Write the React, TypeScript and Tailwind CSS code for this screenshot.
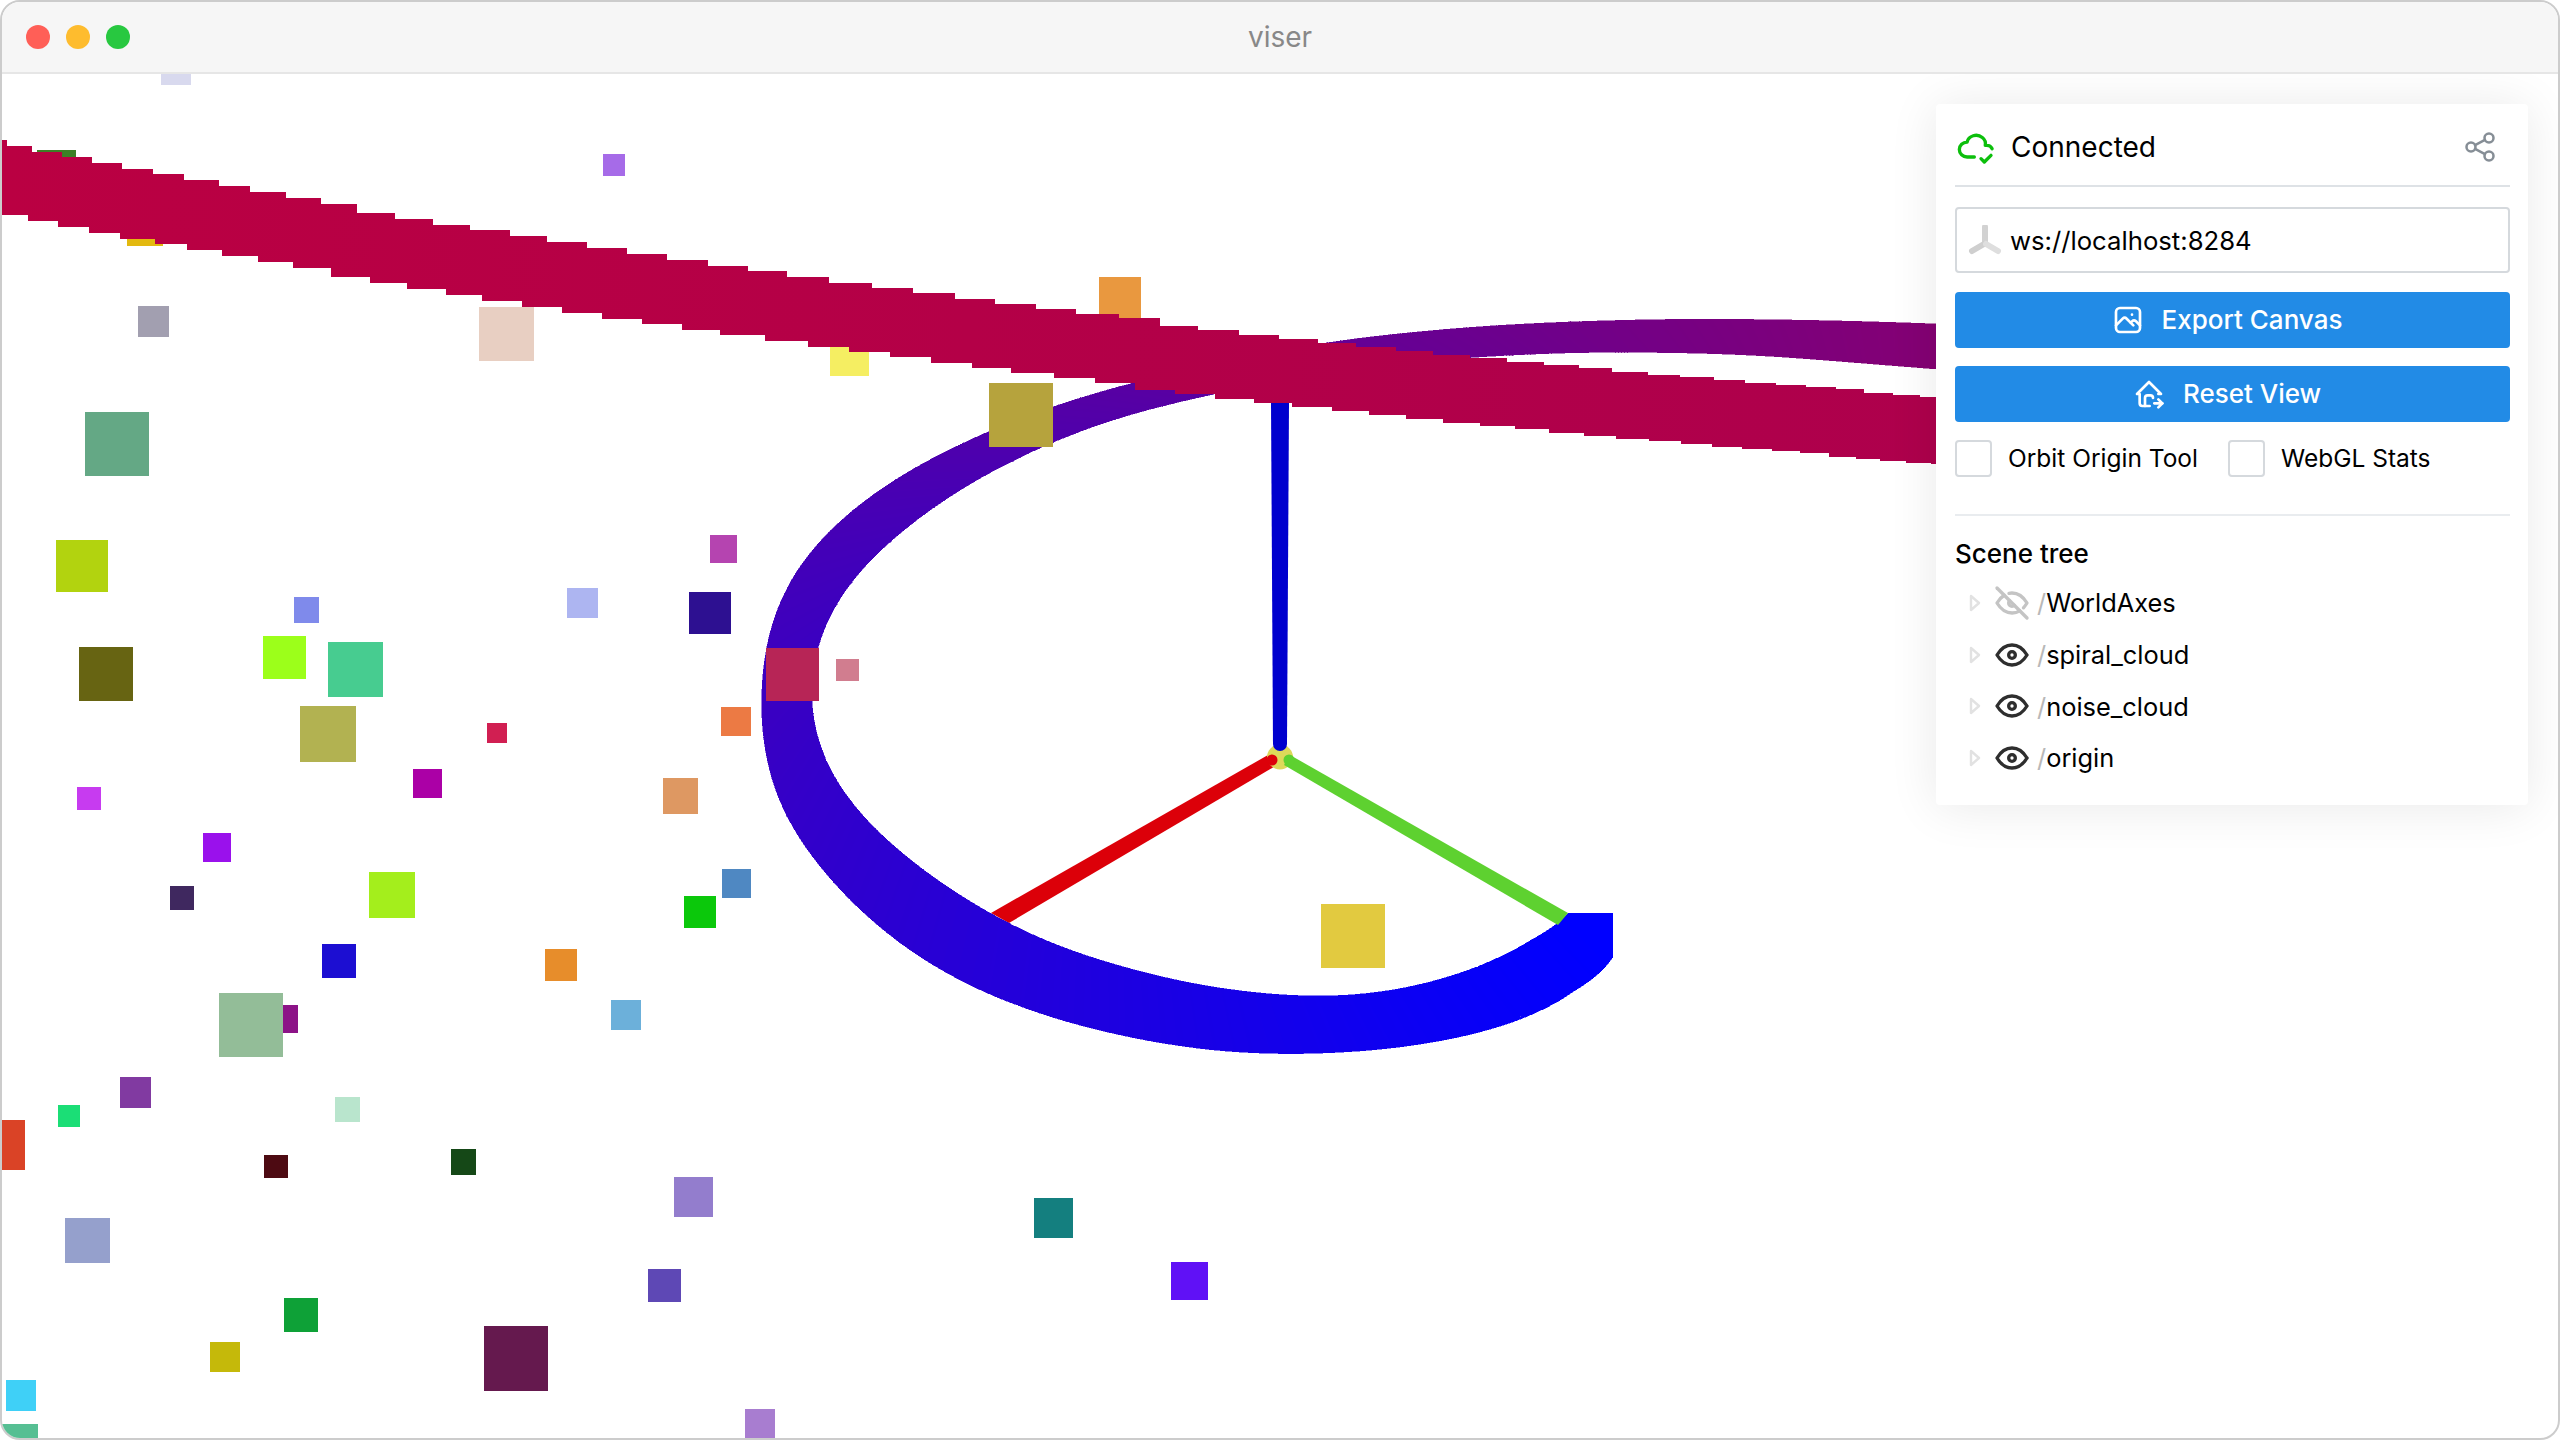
import React from "react";
import { TbCloudCheck, TbShare, TbPhoto, TbHomeMove, TbEye, TbEyeOff } from "react-icons/tb";

type P = [number, number];

const OUTER: P[] = [[1613,957],[1590,987],[1544,1015],[1458,1040],[1371,1052],[1285,1055],[1222,1053],[1142,1041],[1061,1022],[985,995],[920,961],[850,905],[790,832],[769,790],[759,733],[759,700],[762,648],[773,605],[792,568],[824,532],[865,497],[919,463],[989,430],[1053,405],[1133,382],[1230,360],[1318,343],[1372,336],[1468,327],[1531,323],[1595,321],[1658,319],[1721,319],[1805,320],[1889,322],[1936,324]];
const INNER: P[] = [[1568,913],[1558,925],[1532,943],[1486,967],[1400,992],[1314,999],[1199,987],[1084,957],[1010,927],[922,872],[868,825],[832,784],[815,745],[805,700],[813,648],[826,612],[850,578],[882,546],[927,510],[985,473],[1053,441],[1093,425],[1142,410],[1213,394],[1280,380],[1340,369],[1400,363],[1470,357],[1510,355],[1574,352],[1637,352],[1700,353],[1763,355],[1847,362],[1936,369]];

const RIBBON_TOP: P[] = [[2,140],[7,146],[32,152],[62,157],[92,163],[122,169],[153,174],[184,180],[219,186],[250,192],[286,198],[321,204],[357,213],[395,219],[433,225],[470,230],[510,236],[547,242],[587,248],[627,254],[667,260],[708,266],[748,271],[787,277],[829,283],[872,288],[913,293],[955,299],[995,304],[1036,309],[1076,314],[1119,318],[1160,326],[1198,330],[1239,335],[1279,339],[1318,343],[1356,347],[1396,351],[1433,355],[1470,358],[1507,362],[1544,365],[1579,368],[1612,372],[1648,375],[1680,377],[1714,380],[1745,383],[1776,385],[1806,387],[1836,389],[1864,393],[1893,395],[1920,397]];
const RIBBON_BOTTOM: P[] = [[2,215],[28,221],[58,227],[89,233],[120,239],[155,244],[187,250],[222,256],[258,262],[293,268],[331,277],[370,283],[407,289],[446,295],[482,301],[522,307],[562,313],[602,319],[642,324],[682,330],[720,335],[765,341],[808,347],[849,352],[890,357],[931,363],[972,368],[1011,373],[1054,378],[1095,383],[1135,390],[1175,394],[1215,399],[1254,403],[1292,407],[1332,411],[1369,415],[1406,419],[1443,423],[1480,426],[1515,429],[1549,433],[1584,436],[1616,439],[1649,441],[1681,444],[1712,447],[1742,449],[1772,451],[1800,453],[1829,457],[1856,459],[1880,461],[1906,463],[1931,464]];

// x0, x1, y0, y1, colour — a point cloud, in page coordinates
const SQUARES: [number, number, number, number, string][] = [
  [161,191,74,85,"#D8D9EE"],[603,625,154,176,"#A66BE8"],[37,76,150,190,"#3C8026"],[127,163,206,246,"#E3B90F"],
  [138,169,306,337,"#A29FB0"],[479,534,307,361,"#E8CFC2"],[1099,1141,277,330,"#E9983F"],[830,869,335,376,"#F5EE62"],
  [989,1053,383,447,"#B6A33D"],[85,149,412,476,"#64A885"],[56,108,540,592,"#B2D30F"],[710,737,535,563,"#B544B0"],
  [567,598,588,618,"#ADB5F1"],[689,731,592,634,"#2D1091"],[294,319,597,623,"#7F8AEB"],[79,133,647,701,"#676412"],
  [263,306,636,679,"#9CFF1A"],[328,383,642,697,"#47CC90"],[300,356,706,762,"#B2B251"],[487,507,723,743,"#D11F52"],
  [721,751,707,736,"#EC7A44"],[766,819,648,701,"#B72556"],[836,859,659,681,"#D17D8F"],[413,442,769,798,"#AB00A6"],
  [77,101,787,810,"#C73BF0"],[663,698,778,814,"#DE9862"],[203,231,833,862,"#9A11EC"],[170,194,886,910,"#3F285F"],
  [369,415,872,918,"#A4EE1C"],[722,751,869,898,"#4F88C2"],[684,716,896,928,"#0BC80B"],[322,356,944,978,"#1C0ED2"],
  [545,577,949,981,"#E78D2B"],[611,641,1000,1030,"#6CB0DA"],[270,298,1005,1033,"#8C1387"],[219,283,993,1057,"#93BD98"],
  [120,151,1077,1108,"#813AA1"],[58,80,1105,1127,"#1BDE76"],[335,360,1097,1122,"#B9E5CD"],[2,25,1120,1170,"#DA4326"],
  [264,288,1155,1178,"#4D0A12"],[451,476,1149,1175,"#154817"],[674,713,1177,1217,"#937DCD"],[65,110,1218,1263,"#95A0CC"],
  [648,681,1269,1302,"#5E48B5"],[284,318,1298,1332,"#0EA137"],[484,548,1326,1391,"#65194E"],[210,240,1342,1372,"#C5B90A"],
  [6,36,1380,1411,"#3FD0F7"],[745,775,1409,1438,"#A87DD0"],[2,38,1424,1438,"#56BF93"],[1034,1073,1198,1238,"#147F7F"],
  [1171,1208,1262,1300,"#6011F6"],[1321,1385,904,968,"#E2CA40"],
];

function resample(pts: P[], n: number): P[] {
  const d = [0];
  for (let i = 1; i < pts.length; i++) d.push(d[i - 1] + Math.hypot(pts[i][0] - pts[i - 1][0], pts[i][1] - pts[i - 1][1]));
  const total = d[d.length - 1];
  const out: P[] = [];
  let j = 0;
  for (let k = 0; k <= n; k++) {
    const target = (k / n) * total;
    while (j < d.length - 2 && d[j + 1] < target) j++;
    const r = (target - d[j]) / (d[j + 1] - d[j] || 1);
    out.push([pts[j][0] + (pts[j + 1][0] - pts[j][0]) * r, pts[j][1] + (pts[j + 1][1] - pts[j][1]) * r]);
  }
  return out;
}

// moving average with a window that narrows towards the two ends, so they stay put
function smooth(pts: P[], radius: number): P[] {
  return pts.map((_, i) => {
    const r = Math.min(radius, i, pts.length - 1 - i);
    let x = 0, y = 0;
    for (let k = i - r; k <= i + r; k++) {
      x += pts[k][0];
      y += pts[k][1];
    }
    return [x / (2 * r + 1), y / (2 * r + 1)] as P;
  });
}

function stairs(top: P[], bottom: P[], end: number): string {
  const parts: string[] = [];
  top.forEach(([x, y], i) => {
    const nx = i + 1 < top.length ? top[i + 1][0] : end;
    parts.push(`${x},${y} ${nx},${y}`);
  });
  for (let i = bottom.length - 1; i >= 0; i--) {
    const nx = i + 1 < bottom.length ? bottom[i + 1][0] : end;
    parts.push(`${nx},${bottom[i][1]} ${bottom[i][0]},${bottom[i][1]}`);
  }
  return parts.join(" ");
}

const N = 720;
const O = smooth(smooth(resample(OUTER, N), 16), 16);
const I = smooth(smooth(resample(INNER, N), 16), 16);

function Ring() {
  const quads = [];
  for (let k = 0; k < N; k++) {
    const t = k / N;
    const fill = `rgb(${Math.round(133 * t)},0,${Math.round(255 - 140 * t)})`;
    quads.push(
      <polygon
        key={k}
        points={`${O[k][0]},${O[k][1]} ${O[k + 1][0]},${O[k + 1][1]} ${I[k + 1][0]},${I[k + 1][1]} ${I[k][0]},${I[k][1]}`}
        fill={fill}
        stroke={fill}
        strokeWidth={0.5}
        shapeRendering="crispEdges"
      />,
    );
  }
  return (
    <g>
      <polygon points="1568,913 1613,913 1613,957" fill="#0000FF" shapeRendering="crispEdges" />
      {quads}
    </g>
  );
}

function Scene() {
  return (
    <svg className="absolute inset-0 block" width={2556} height={1364} viewBox="2 74 2556 1364">
      <defs>
        <linearGradient id="ribbon" gradientUnits="userSpaceOnUse" x1="2" y1="0" x2="1936" y2="0">
          <stop offset="0" stopColor="#BA0042" />
          <stop offset="1" stopColor="#AE004C" />
        </linearGradient>
      </defs>
      <polygon points="1268,755 1277,765 1009,923 991,913" fill="#DC0009" />
      <Ring />
      <ellipse cx={1280} cy={757} rx={13} ry={12.5} fill="#DDD95A" />
      <polygon points="1271,403 1289,403 1287,744 1273,744" fill="#0000CE" />
      <circle cx={1280} cy={744} r={7} fill="#0000CE" />
      <circle cx={1272} cy={760} r={5.5} fill="#DC0009" />
      <polygon points="1284,765 1290,755 1568,913 1558,925" fill="#5ED130" />
      <circle cx={1289} cy={760} r={5.5} fill="#5ED130" />
      {SQUARES.map(([x0, x1, y0, y1, c], i) => (
        <rect key={i} x={x0} y={y0} width={x1 - x0} height={y1 - y0} fill={c} />
      ))}
      <polygon points={stairs(RIBBON_TOP, RIBBON_BOTTOM, 1936)} fill="url(#ribbon)" />
    </svg>
  );
}

function Logo() {
  return (
    <svg width={34} height={30} viewBox="0 0 34 30" className="shrink-0">
      <path d="M17 2 L17 19" stroke="#D2D2D2" strokeWidth={6} strokeLinecap="round" />
      <path d="M16 19 L4 26" stroke="#CFCFCF" strokeWidth={6} strokeLinecap="round" />
      <path d="M18 19 L30 26" stroke="#DEDEDE" strokeWidth={6} strokeLinecap="round" />
    </svg>
  );
}

function Caret() {
  return (
    <svg width={12} height={18} viewBox="0 0 12 18" className="shrink-0">
      <polygon points="2,2 10,9 2,16" fill="none" stroke="#E2E2E2" strokeWidth={2.4} strokeLinejoin="round" />
    </svg>
  );
}

function TreeRow({ name, hidden }: { name: string; hidden?: boolean }) {
  return (
    <div className="flex h-[51.7px] items-center pl-[14px]">
      <Caret />
      <span className="ml-[10px] flex w-[42px] shrink-0 justify-center">
        {hidden ? <TbEyeOff size={40} className="text-[#C4C4C4]" /> : <TbEye size={40} className="text-[#2E2E2E]" />}
      </span>
      <span className="ml-[4px] text-[25.4px] leading-none text-black">
        <span className="text-[#B8B8B8]">/</span>
        {name}
      </span>
    </div>
  );
}

function Check({ label }: { label: string }) {
  return (
    <div className="flex items-center gap-[16px]">
      <span className="h-[37px] w-[37px] rounded-[4px] border-2 border-[#D5D9DD] bg-white" />
      <span className="text-[24.5px] leading-none text-black">{label}</span>
    </div>
  );
}

function Panel() {
  return (
    <div className="absolute right-[30px] top-[30px] w-[592px] rounded-[4px] bg-white pb-[21px] pl-[19px] pr-[18px] shadow-[0_2px_50px_rgba(0,0,0,0.09)]">
      <div className="flex h-[83px] items-center justify-between border-b-2 border-[#DEE2E6] pt-[4px]">
        <div className="flex items-center gap-[15px] pl-[1px]">
          <TbCloudCheck size={40} className="text-[#0CBF0C]" />
          <span className="text-[28px] leading-none text-black">Connected</span>
        </div>
        <TbShare size={36} className="mr-[12px] text-[#868E96]" strokeWidth={1.7} />
      </div>
      <div className="mt-[20px] flex h-[66px] items-center gap-[8px] rounded-[4px] border-2 border-[#D5D9DD] pl-[11px]">
        <Logo />
        <span className="pt-[2px] text-[25.7px] leading-none text-black">ws://localhost:8284</span>
      </div>
      <div className="mt-[19px] flex h-[56px] items-center justify-center gap-[18px] rounded-[4px] bg-[#228BE6] pr-[11px] text-white">
        <TbPhoto size={32} />
        <span className="text-[26px] font-medium leading-none">Export Canvas</span>
      </div>
      <div className="mt-[18px] flex h-[56px] items-center justify-center gap-[18px] rounded-[4px] bg-[#228BE6] pr-[11px] text-white">
        <TbHomeMove size={32} />
        <span className="text-[26px] font-medium leading-none">Reset View</span>
      </div>
      <div className="mt-[18px] flex gap-[30px]">
        <Check label="Orbit Origin Tool" />
        <Check label="WebGL Stats" />
      </div>
      <div className="mt-[37px] h-[2px] bg-[#E9ECEF]" />
      <div className="mt-[20px] text-[26px] font-medium leading-[36px] text-black">Scene tree</div>
      <div className="mt-[5px]">
        <TreeRow name="WorldAxes" hidden />
        <TreeRow name="spiral_cloud" />
        <TreeRow name="noise_cloud" />
        <TreeRow name="origin" />
      </div>
    </div>
  );
}

export default function App() {
  return (
    <div className="h-[1440px] w-[2560px] bg-white font-[family-name:Inter,sans-serif]">
      <div className="flex h-full w-full flex-col overflow-hidden rounded-[20px] border-2 border-[#CCCCCC] bg-white">
        <div className="relative flex h-[72px] shrink-0 items-center justify-center border-b-2 border-[#E6E6E6] bg-[#F6F6F6]">
          <div className="absolute left-[24px] top-[23px] flex gap-[16px]">
            <span className="h-[24px] w-[24px] rounded-full bg-[#FF5F57]" />
            <span className="h-[24px] w-[24px] rounded-full bg-[#FEBC2E]" />
            <span className="h-[24px] w-[24px] rounded-full bg-[#28C840]" />
          </div>
          <span className="text-[28px] leading-none text-[#888888]">viser</span>
        </div>
        <div className="relative flex-1 overflow-hidden">
          <Scene />
          <Panel />
        </div>
      </div>
    </div>
  );
}
